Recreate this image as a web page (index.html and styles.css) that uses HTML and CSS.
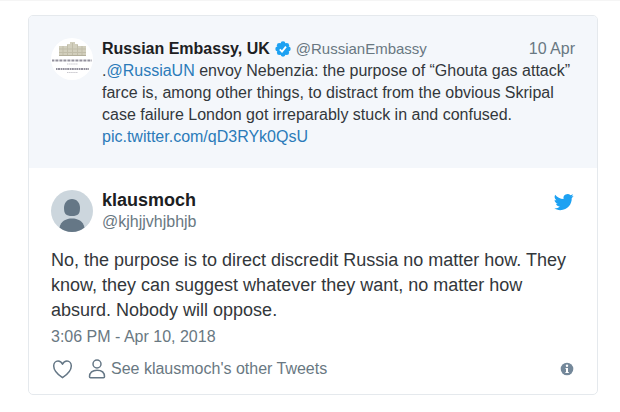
FILE: index.html
```html
<!DOCTYPE html>
<html lang="en">
<head>
<meta charset="utf-8">
<meta name="viewport" content="width=device-width, initial-scale=1">
<title>Tweet by klausmoch</title>
<link rel="stylesheet" href="styles.css">
</head>
<body>
<main class="page">
  <article class="card">
    <section class="quote">
      <svg class="avatar" viewBox="0 0 42 42" aria-hidden="true">
        <circle cx="21" cy="21" r="21" fill="#fff"/>
        <path d="M8 8h8V6h3V4h5v2h3v2h8v10H8z" fill="#d2cfbd"/>
        <path d="M8 11h27M8 14.500h27M12 8v9M16.500 7v10M21.500 5v12M26.500 7v10M31 8v9" stroke="#c1bda9" fill="none"/>
        <path d="M8 17.500h27" stroke="#b3af9b"/>
        <g stroke="#92909c" fill="none">
          <path d="M1 22.500h40" stroke-width="2" stroke-dasharray="2 .6 1 .4"/>
          <path d="M16 26h11" stroke="#c9c8ce" stroke-dasharray="1.500 .6"/>
          <path d="M5 31h33" stroke-width="2" stroke-dasharray="1.500 .5 2 .6"/>
          <path d="M16 34.500h11" stroke="#c9c8ce" stroke-dasharray="1.500 .6"/>
        </g>
      </svg>
      <div class="quote-main">
        <header class="quote-head">
          <strong class="name">Russian Embassy, UK</strong>
          <svg class="verified" viewBox="0 0 16 16" role="img" aria-label="Verified account">
            <g fill="#1da1f2"><circle cx="8" cy="8" r="6"/><circle cx="8" cy="2.700" r="2.400"/><circle cx="11.700" cy="4.300" r="2.400"/><circle cx="13.300" cy="8" r="2.400"/><circle cx="11.700" cy="11.700" r="2.400"/><circle cx="8" cy="13.300" r="2.400"/><circle cx="4.300" cy="11.700" r="2.400"/><circle cx="2.700" cy="8" r="2.400"/><circle cx="4.300" cy="4.300" r="2.400"/></g>
            <path d="M4.800 8.300l2.200 2.300 4-5" fill="none" stroke="#fff" stroke-width="1.800"/>
          </svg>
          <span class="handle">@RussianEmbassy</span>
          <time class="date" datetime="2018-04-10">10 Apr</time>
        </header>
        <p class="quote-text">.<a href="#">@RussiaUN</a> envoy Nebenzia: the purpose of “Ghouta gas attack” farce is, among other things, to distract from the obvious Skripal case failure London got irreparably stuck in and confused. <a href="#">pic.twitter.com/qD3RYk0QsU</a></p>
      </div>
    </section>
    <section class="tweet">
      <header class="author">
        <svg class="avatar" viewBox="0 0 42 42" aria-hidden="true">
          <circle cx="21" cy="21" r="21" fill="#ccd6dd"/>
          <path d="M21 9c5 0 8 4 8 9 0 6-2 8-8 8s-8-2-8-8c0-5 3-9 8-9z" fill="#657786"/>
          <path d="M8.500 37.500C10 31 15 28.500 21 28.500s11 2.500 12.500 9C30 40.400 26 42 21 42S12 40.400 8.500 37.500z" fill="#657786"/>
        </svg>
        <div class="author-names">
          <strong class="name">klausmoch</strong>
          <span class="handle">@kjhjjvhjbhjb</span>
        </div>
        <svg class="bird" viewBox="0 0 24 20" role="img" aria-label="Twitter">
          <path fill="#1da1f2" d="M23.600 2.600c-.9.400-1.800.7-2.800.8 1-.6 1.800-1.600 2.100-2.700-.9.600-2 1-3.100 1.200A4.900 4.900 0 0 0 11.500 6.400C7.400 6.200 3.800 4.200 1.400 1.200c-1.300 2.200-.7 5.100 1.500 6.600-.8 0-1.600-.2-2.200-.6 0 2.300 1.600 4.400 3.900 4.900-.7.200-1.500.2-2.200.1.600 2 2.400 3.400 4.600 3.400A9.900 9.900 0 0 1 0 17.600c2.200 1.400 4.800 2.200 7.500 2.200 9.100 0 14.100-7.500 13.800-14.500.9-.7 1.700-1.600 2.300-2.700z"/>
        </svg>
      </header>
      <p class="tweet-text">No, the purpose is to direct discredit Russia no matter how. They know, they can suggest whatever they want, no matter how absurd. Nobody will oppose.</p>
      <time class="stamp" datetime="2018-04-10T15:06">3:06 PM - Apr 10, 2018</time>
      <footer class="actions">
        <button class="like" type="button" aria-label="Like">
          <svg class="icon" viewBox="0 0 22 20" aria-hidden="true"><path d="M11.500 18.700C7 15.700 2.700 11.600 2.700 7 2.700 4.200 4.600 2 7 2c2 0 3.600 1.200 4.500 3.200C12.400 3.200 14 2 16 2c2.400 0 4.300 2.200 4.300 5 0 4.600-4.300 8.700-8.800 11.700z" fill="none" stroke="#657786" stroke-width="1.500" stroke-linejoin="round"/></svg>
        </button>
        <a class="more" href="#">
          <svg class="person" viewBox="0 0 18 20" aria-hidden="true"><g fill="none" stroke="#657786" stroke-width="1.500"><circle cx="9" cy="5" r="4"/><path d="M1.500 17.700c0-4.200 3-6.500 7.500-6.500s7.500 2.300 7.500 6.500c0 .6-.3 1-1 1h-13c-.7 0-1-.4-1-1z"/></g></svg>
          See klausmoch's other Tweets
        </a>
        <button class="info" type="button" aria-label="Twitter Ads info and privacy">
          <svg class="info-icon" viewBox="0 0 14 14" aria-hidden="true"><circle cx="7" cy="7" r="6.300" fill="#74889a"/><circle cx="7" cy="3.700" r="1.200" fill="#fff"/><path d="M5.500 6H8v4h.8v1H5.400v-1H6V7h-.5z" fill="#fff"/></svg>
        </button>
      </footer>
    </section>
  </article>
</main>
</body>
</html>
```
FILE: styles.css
```css
* { box-sizing: border-box; }

body {
  margin: 0;
  background: #fff;
  border-top: 1px solid #f5f5f5;
  color: #33373b;
  font-family: "Liberation Sans", Arial, sans-serif;
  font-size: 16px;
}

.page { padding: 14px 22px 16px 28px; }

.card {
  overflow: hidden;
  border: 1px solid #e5e9ed;
  border-radius: 5px;
}

a { color: #2b7bb9; text-decoration: none; }
p { margin: 0; }
button { padding: 0; border: 0; background: none; cursor: pointer; }
svg { display: block; }

.avatar { flex: none; width: 42px; height: 42px; }

.quote {
  display: flex;
  gap: 9px;
  padding: 22px 22px 20px;
  background: #f4f7fb;
}

.quote-main { flex: 1; min-width: 0; }

.quote-head {
  display: flex;
  align-items: center;
  gap: 5px;
  line-height: 22px;
}

.name { color: #1c2022; font-size: 16px; }
.handle, .date, .stamp { color: #697882; }
.quote-head .handle { font-size: 15px; }
.date { margin-left: auto; }
.verified { width: 16px; height: 16px; }
.quote-text { line-height: 22px; }

.tweet { padding: 22px 23px 14px 22px; }

.author { display: flex; gap: 9px; }
.author-names { display: flex; flex: 1; flex-direction: column; line-height: 21px; }
.author .name { font-size: 18px; }
.bird { width: 20px; height: 18px; margin-top: 3px; }

.tweet-text {
  margin-top: 16px;
  font-size: 18px;
  line-height: 25px;
}

.stamp { display: block; margin-top: 4px; line-height: 20px; }

.actions {
  display: flex;
  align-items: center;
  margin-top: 11px;
  line-height: 22px;
}

.icon { width: 22px; height: 20px; }
.more { display: flex; align-items: center; gap: 5px; margin-left: 15px; color: #697882; }
.person { width: 18px; height: 20px; }
.info { margin-left: auto; }
.info-icon { width: 14px; height: 14px; }
```
